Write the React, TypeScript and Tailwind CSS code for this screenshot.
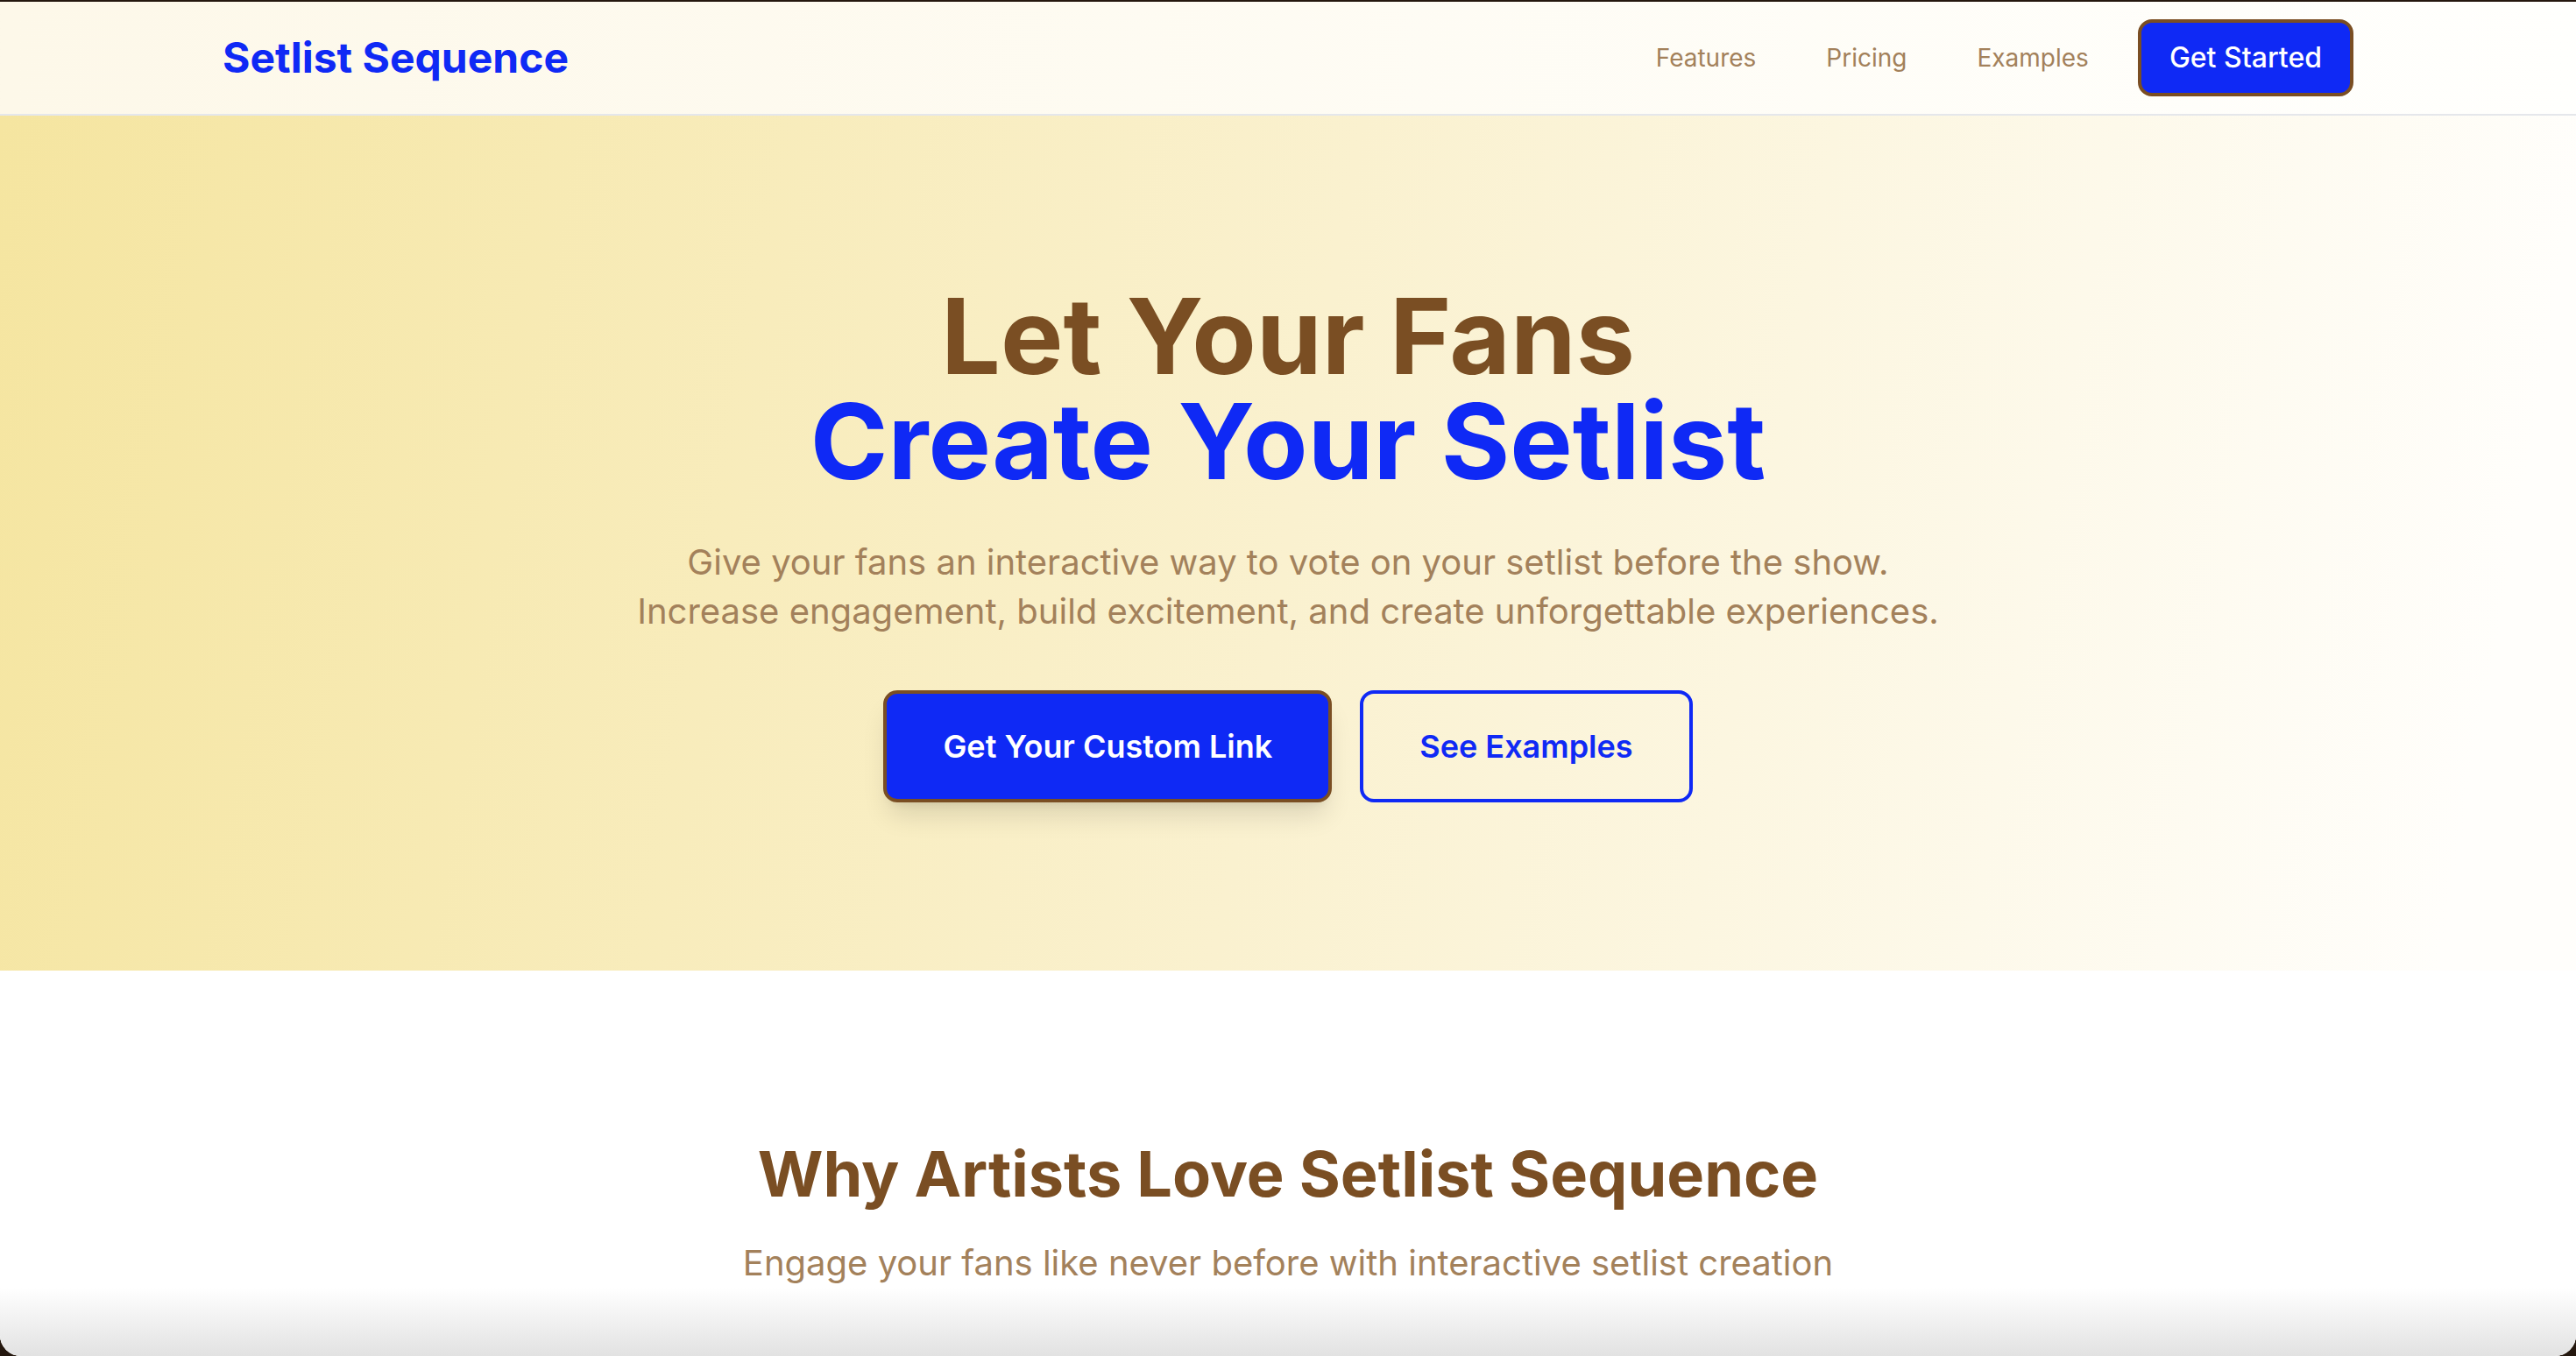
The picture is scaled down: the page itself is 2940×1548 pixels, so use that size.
import React from "react";

const font = { fontFamily: "Inter, 'Noto Sans', sans-serif" };

export default function App() {
  return (
    <div className="w-full h-[1548px] bg-[#24170e] pt-[2px] overflow-hidden" style={font}>
      <div className="w-full h-full flex flex-col bg-white rounded-b-[24px] overflow-hidden">
        {/* Nav */}
        <nav className="h-[130px] shrink-0 border-b-2 border-[#e5e7eb] bg-gradient-to-r from-[#fdf8e9] to-[#fffffd]">
          <div className="max-w-[2560px] mx-auto px-16 h-full flex items-center justify-between">
            <div className="text-[48px] leading-[64px] font-bold text-[#0f29f5]">Setlist Sequence</div>
            <div className="flex items-center gap-8">
              <a className="px-6 py-4 text-[28px] leading-[40px] text-[#a3815b]">Features</a>
              <a className="px-6 py-4 text-[28px] leading-[40px] text-[#a3815b]">Pricing</a>
              <a className="px-6 py-4 text-[28px] leading-[40px] text-[#a3815b]">Examples</a>
              <button className="px-8 py-4 text-[32px] leading-[48px] font-medium text-white bg-[#0f29f5] border-4 border-[#7a4e23] rounded-2xl">
                Get Started
              </button>
            </div>
          </div>
        </nav>

        {/* Hero */}
        <section className="shrink-0 py-[192px] bg-linear-[100deg] from-[#f5e5a0] via-[#faf1cf] via-50% to-[#fffefb] to-95%">
          <div className="max-w-[2560px] mx-auto px-16 flex flex-col items-center text-center">
            <h1 className="text-[120px] leading-none font-bold">
              <span className="block text-[#7a4e23]">Let Your Fans</span>
              <span className="block text-[#0f29f5]">Create Your Setlist</span>
            </h1>
            <p className="mt-[50px] text-[40px] leading-[56px] text-[#a3815b]">
              <span className="block">Give your fans an interactive way to vote on your setlist before the show.</span>
              <span className="block">Increase engagement, build excitement, and create unforgettable experiences.</span>
            </p>
            <div className="mt-[62px] flex items-center gap-8">
              <button className="px-16 py-8 text-[36px] leading-[56px] font-semibold text-white bg-[#0f29f5] border-4 border-[#7a4e23] rounded-2xl shadow-[0_20px_30px_-6px_rgba(0,0,0,0.12),0_8px_12px_-8px_rgba(0,0,0,0.1)]">
                Get Your Custom Link
              </button>
              <button className="px-16 py-8 text-[36px] leading-[56px] font-semibold text-[#0f29f5] bg-transparent border-4 border-[#0f29f5] rounded-2xl">
                See Examples
              </button>
            </div>
          </div>
        </section>

        {/* Features intro */}
        <section className="flex-1 flex flex-col bg-white">
          <div className="pt-[192px] flex flex-col items-center text-center">
            <h2 className="text-[72px] leading-[80px] font-bold text-[#7a4e23]">Why Artists Love Setlist Sequence</h2>
            <p className="mt-[34px] text-[40px] leading-[56px] text-[#a3815b]">
              Engage your fans like never before with interactive setlist creation
            </p>
          </div>
          <div className="flex-1 bg-gradient-to-b from-white to-[#e2e2e2]" />
        </section>
      </div>
    </div>
  );
}
